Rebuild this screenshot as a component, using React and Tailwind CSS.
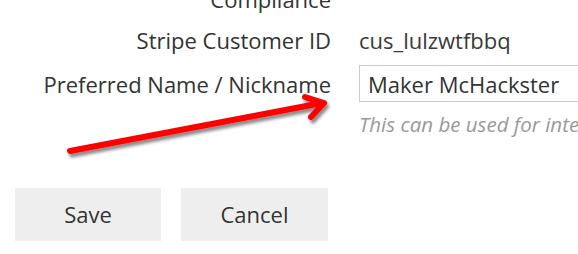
import React from 'react';

const Arrow = () => (
  <svg className="absolute left-0 top-0 pointer-events-none" width="578" height="254" viewBox="0 0 578 254">
    <defs>
      <filter id="arrowShadow" x="-10%" y="-30%" width="130%" height="180%">
        <feDropShadow dx="2" dy="3.5" stdDeviation="1.8" floodColor="#000" floodOpacity="0.45" />
      </filter>
    </defs>
    <g filter="url(#arrowShadow)" stroke="#ff0000" strokeWidth="6" strokeLinecap="round" strokeLinejoin="round" fill="none">
      <path d="M70 151 L322 103" />
      <path d="M305 97 L324 103 L311 117" />
    </g>
  </svg>
);

export default function App() {
  return (
    <div className="relative w-[578px] h-[254px] overflow-hidden bg-white font-['Open_Sans',sans-serif] text-[#333]">
      <div className="-mt-[16px]">
        <div className="flex h-[30px] items-center">
          <div className="w-[331px] text-right text-[22px] leading-[30px]">Compliance</div>
        </div>

        <div className="mt-[11px] flex h-[30px] items-center gap-[28px]">
          <div className="w-[331px] shrink-0 text-right text-[22px] leading-[30px]">Stripe Customer ID</div>
          <div className="text-[22px] leading-[30px] text-[#3a3a3a]">cus_lulzwtfbbq</div>
        </div>

        <div className="mt-[10px] flex items-center gap-[28px]">
          <div className="w-[331px] shrink-0 text-right text-[22px] leading-[30px]">Preferred Name / Nickname</div>
          <div className="flex h-[37px] w-[260px] shrink-0 items-center border border-[#ccc] bg-white pl-[8px] text-[22px] leading-[30px] text-[#333]">
            Maker McHackster
          </div>
        </div>

        <div className="mt-[9px] flex">
          <div className="ml-[359px] whitespace-nowrap text-[20.5px] italic leading-[26px] text-[#999]">
            This can be used for internal communication
          </div>
        </div>

        <div className="mt-[51px] flex gap-[20px] pl-[15px]">
          <button className="h-[53px] w-[146px] bg-[#eee] text-[22px] text-[#333]">Save</button>
          <button className="h-[53px] w-[147px] bg-[#eee] text-[22px] text-[#333]">Cancel</button>
        </div>
      </div>
      <Arrow />
    </div>
  );
}
